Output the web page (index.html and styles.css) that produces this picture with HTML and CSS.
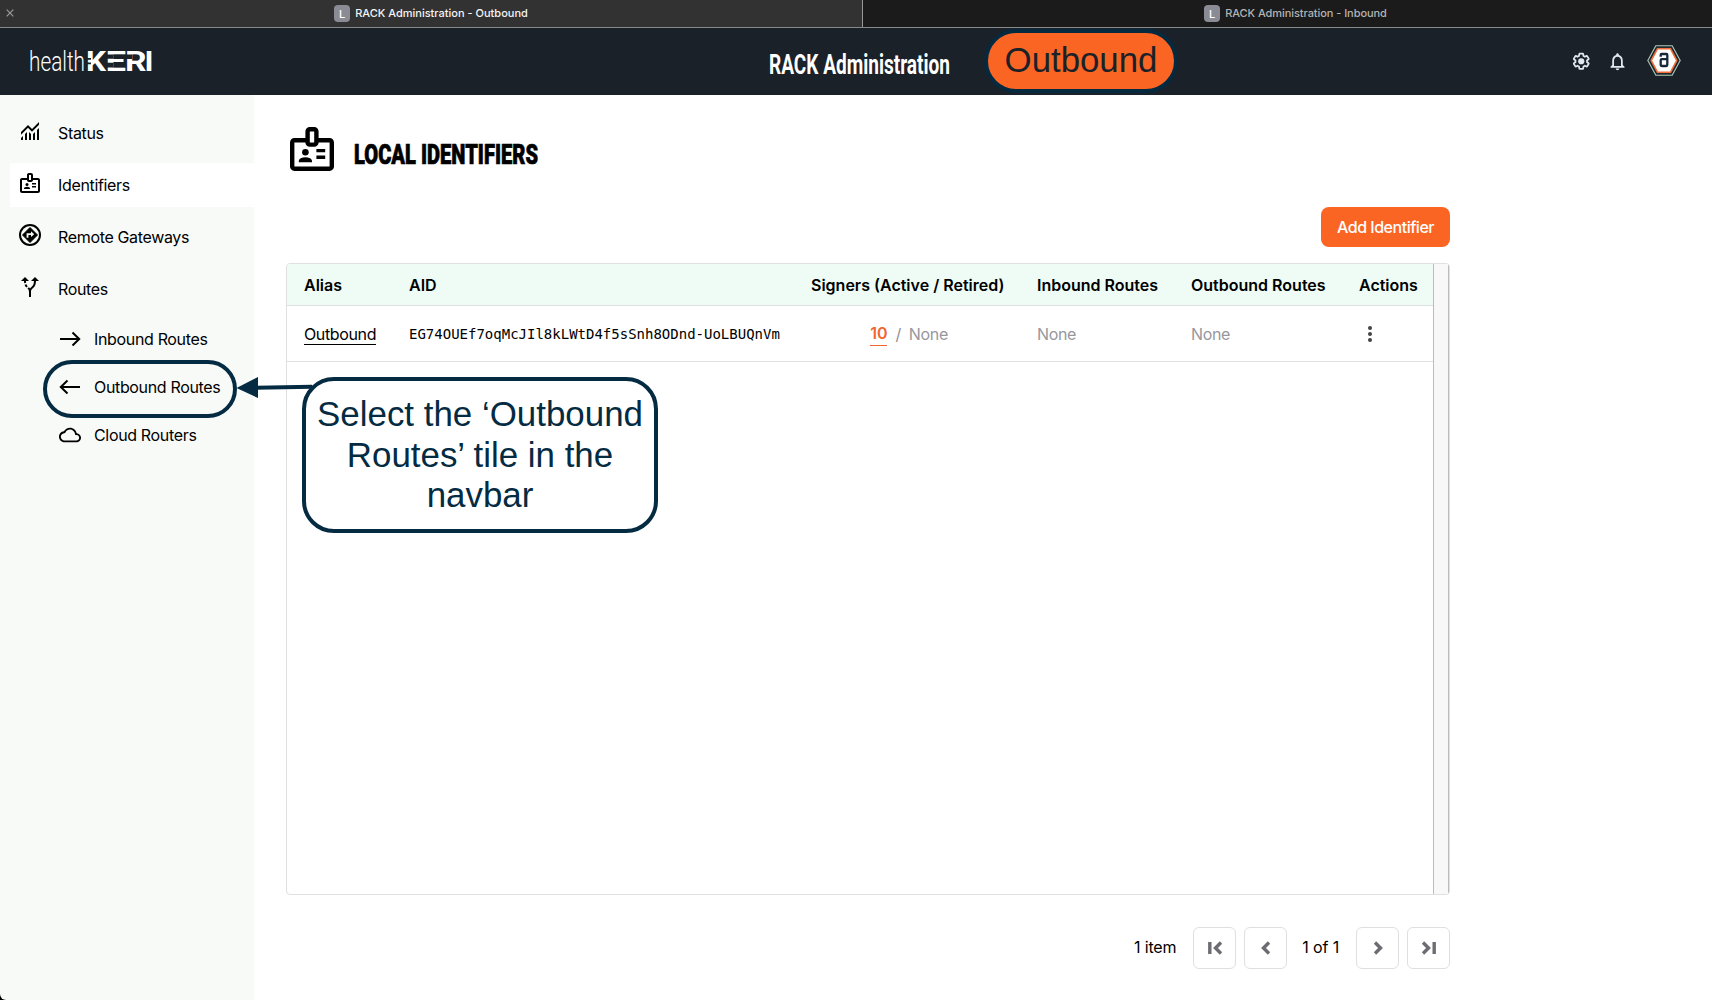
FILE: index.html
```html
<!DOCTYPE html>
<html lang="en">
<head>
<meta charset="utf-8">
<title>RACK Administration - Outbound</title>
<link rel="stylesheet" href="styles.css">
</head>
<body>
<div class="tabs">
  <div class="tab tab-active">
    <svg class="tab-close" viewBox="0 0 8 8"><path d="M.7.7l6.6 6.6M7.3.7L.7 7.3"/></svg>
    <span class="tab-badge">L</span><span class="tab-title">RACK Administration - Outbound</span>
  </div>
  <div class="tab tab-idle">
    <span class="tab-badge">L</span><span class="tab-title">RACK Administration - Inbound</span>
  </div>
</div>
<header class="header">
  <svg class="logo" viewBox="0 0 124 28">
    <text class="logo-thin" x="0" y="24" textLength="56" lengthAdjust="spacingAndGlyphs">health</text>
    <text class="logo-bold" x="57" y="24" textLength="20" lengthAdjust="spacingAndGlyphs">K</text>
    <text class="logo-bold" x="76.500" y="24" textLength="20.500" lengthAdjust="spacingAndGlyphs">E</text>
    <text class="logo-bold" x="96" y="24" textLength="21.500" lengthAdjust="spacingAndGlyphs">R</text>
    <text class="logo-bold" x="115.500" y="24" textLength="9" lengthAdjust="spacingAndGlyphs">I</text>
    <path class="logo-cut" d="M77 7.500h7.500v4.300H77zM77 15.800h7.500v4.600H77zM57 11h5v1.700h-5zM57 15.500h5v1.700h-5zM96.500 7.500h6.500v4.500h-6.500z"/>
  </svg>
  <svg class="app-title" viewBox="0 0 182 34">
    <text x="0" y="27" textLength="181" lengthAdjust="spacingAndGlyphs">RACK Administration</text>
  </svg>
  <span class="pill">Outbound</span>
  <div class="tools">
    <svg class="gear" viewBox="0 0 24 24"><path d="M19.43 12.98c.04-.32.07-.64.07-.98 0-.34-.03-.66-.07-.98l2.110-1.650c.19-.15.24-.42.12-.64l-2-3.460c-.09-.16-.26-.25-.44-.25-.06 0-.12.01-.17.03l-2.490 1c-.52-.4-1.080-.73-1.690-.98l-.38-2.650C14.460 2.180 14.250 2 14 2h-4c-.25 0-.46.18-.49.42l-.38 2.650c-.61.25-1.170.59-1.690.98l-2.490-1c-.06-.02-.12-.03-.18-.03-.17 0-.34.09-.43.25l-2 3.460c-.13.22-.07.49.12.64l2.110 1.650c-.04.32-.07.65-.07.98 0 .33.03.66.07.98l-2.110 1.650c-.19.15-.24.42-.12.64l2 3.460c.09.16.26.25.44.25.06 0 .12-.01.17-.03l2.490-1c.52.4 1.080.73 1.690.98l.38 2.650c.03.24.24.42.49.42h4c.25 0 .46-.18.49-.42l.38-2.650c.61-.25 1.170-.59 1.690-.98l2.490 1c.06.02.12.03.18.03.17 0 .34-.09.43-.25l2-3.460c.12-.22.07-.49-.12-.64z"/><circle cx="12" cy="12" r="4"/></svg>
    <svg class="bell" viewBox="0 0 24 24"><path d="M12 22c1.100 0 2-.9 2-2h-4c0 1.100.9 2 2 2zm6-6v-5c0-3.070-1.630-5.640-4.500-6.320V4c0-.83-.67-1.500-1.500-1.500s-1.500.67-1.500 1.500v.68C7.640 5.360 6 7.920 6 11v5l-2 2v1h16v-1l-2-2zm-2 1H8v-6c0-2.480 1.510-4.500 4-4.500s4 2.020 4 4.500v6z"/></svg>
    <svg class="avatar" viewBox="0 0 34 31">
      <path class="hex-line" d="M.8 15.500L8.800.7h16.400l8 14.800-8 14.800H8.800z"/>
      <path class="hex-fill" d="M4.200 15.500L10.500 3.700h13l6.300 11.800-6.300 11.800h-13z"/>
      <path class="hex-mark" d="M13.700 11.800V10q0-1 1-1h4.600q1 0 1 1v9.800q0 1.200-1 1.200h-4.600q-1 0-1-1v-4.800q0-1 1-1h5.600"/>
    </svg>
  </div>
</header>
<div class="body">
  <nav class="nav">
    <a class="item"><svg class="ico" viewBox="0 -960 960 960"><path d="M120-120v-80l80-80v160h-80Zm160 0v-240l80-80v320h-80Zm160 0v-320l80 81v239h-80Zm160 0v-239l80-80v319h-80Zm160 0v-400l80-80v480h-80ZM120-327v-113l280-280 160 160 280-280v113L560-447 400-607 120-327Z"/></svg><span>Status</span></a>
    <a class="item item-on"><svg class="ico" viewBox="0 0 24 24"><path d="M20 7h-5V4c0-1.100-.9-2-2-2h-2c-1.100 0-2 .9-2 2v3H4c-1.100 0-2 .9-2 2v11c0 1.100.9 2 2 2h16c1.100 0 2-.9 2-2V9c0-1.100-.9-2-2-2zM11 4h2v5h-2V4zm9 16H4V9h5c0 1.100.9 2 2 2h2c1.100 0 2-.9 2-2h5v11z"/><circle cx="9" cy="13.500" r="1.500"/><path d="M6 18v-.43c0-.6.36-1.150.92-1.390a5.300 5.300 0 0 1 4.160 0c.56.24.92.780.92 1.390V18zM14 12h4v1.500h-4zM14 15h4v1.500h-4z"/></svg><span>Identifiers</span></a>
    <a class="item"><svg class="ico" viewBox="0 0 24 24"><circle class="ring" cx="12" cy="12" r="10"/><path d="M12 4.500l7.500 7.500-7.500 7.500L4.500 12z" stroke="#000" stroke-linejoin="round"/><path class="turn" d="M9.500 14.800v-3.600h4.300"/><path fill="#f8faf8" d="M13 8.300l3.200 2.900-3.200 2.900z"/></svg><span>Remote Gateways</span></a>
    <a class="item"><svg class="ico" viewBox="0 0 24 24"><path d="M9.780 11.160l-1.420 1.420c-.68-.69-1.340-1.580-1.790-2.940l1.940-.49c.32.89.77 1.500 1.270 2.010zM11 6L7 2 3 6h3.020c.02.81.08 1.540.19 2.170l1.940-.49C8.080 7.200 8.030 6.630 8.020 6H11zm10 0l-4-4-4 4h2.990c-.1 3.680-1.280 4.750-2.540 5.880-.5.44-1.010.92-1.450 1.550-.34-.49-.73-.88-1.130-1.240L9.460 13.600c.93.85 1.540 1.540 1.540 3.400v5h2v-5c0-2.020.71-2.660 1.790-3.630 1.380-1.240 3.080-2.780 3.200-7.370H21z"/></svg><span>Routes</span></a>
    <div class="sub">
      <a class="subitem"><svg class="sico" viewBox="0 0 22 22"><path class="line" d="M1 11h19.500M13.500 4.500L20.200 11l-6.700 6.500"/></svg><span>Inbound Routes</span></a>
      <a class="subitem"><svg class="sico" viewBox="0 0 22 22"><path class="line" d="M21 11H1.500M8.500 4.500L1.800 11l6.700 6.500"/></svg><span>Outbound Routes</span></a>
      <a class="subitem"><svg class="sico" viewBox="0 0 24 24"><path d="M19.350 10.040C18.670 6.590 15.640 4 12 4 9.110 4 6.600 5.640 5.350 8.040 2.340 8.360 0 10.910 0 14c0 3.310 2.690 6 6 6h13c2.760 0 5-2.240 5-5 0-2.640-2.050-4.780-4.650-4.960zM19 18H6c-2.210 0-4-1.790-4-4 0-2.050 1.530-3.760 3.560-3.970l1.070-.11.5-.95C8.080 7.140 9.940 6 12 6c2.620 0 4.880 1.860 5.390 4.430l.3 1.500 1.530.11c1.560.1 2.780 1.410 2.780 2.960 0 1.650-1.350 3-3 3z"/></svg><span>Cloud Routers</span></a>
    </div>
  </nav>
  <main class="main">
    <div class="heading">
      <svg class="heading-ico" viewBox="2 2 20 20"><path d="M20 7h-5V4c0-1.100-.9-2-2-2h-2c-1.100 0-2 .9-2 2v3H4c-1.100 0-2 .9-2 2v11c0 1.100.9 2 2 2h16c1.100 0 2-.9 2-2V9c0-1.100-.9-2-2-2zM11 4h2v5h-2V4zm9 16H4V9h5c0 1.100.9 2 2 2h2c1.100 0 2-.9 2-2h5v11z"/><circle cx="9" cy="13.500" r="1.500"/><path d="M6 18v-.43c0-.6.36-1.150.92-1.390a5.300 5.300 0 0 1 4.160 0c.56.24.92.780.92 1.390V18zM14 12h4v1.500h-4zM14 15h4v1.500h-4z"/></svg>
      <svg class="heading-text" viewBox="0 0 186 34"><text x="0" y="27" textLength="184" lengthAdjust="spacingAndGlyphs">LOCAL IDENTIFIERS</text></svg>
    </div>
    <div class="actions"><button class="add">Add Identifier</button></div>
    <div class="panel">
      <div class="grid">
        <div class="row row-head">
          <span>Alias</span><span>AID</span><span>Signers (Active / Retired)</span><span>Inbound Routes</span><span>Outbound Routes</span><span>Actions</span>
        </div>
        <div class="row row-data">
          <span><a class="alias">Outbound</a></span>
          <span class="aid">EG74OUEf7oqMcJIl8kLWtD4f5sSnh8ODnd-UoLBUQnVm</span>
          <span class="signers"><a class="count">10</a><i>/</i><em>None</em></span>
          <span class="none">None</span>
          <span class="none">None</span>
          <span class="dots"><svg viewBox="0 0 4 18"><circle cx="2" cy="3" r="2"/><circle cx="2" cy="9" r="2"/><circle cx="2" cy="15" r="2"/></svg></span>
        </div>
      </div>
      <div class="gutter"></div>
    </div>
    <div class="pager">
      <span class="total">1 item</span>
      <button class="pg"><svg viewBox="0 0 16 12"><path d="M2.800 0v12M14 .5L8.500 6l5.500 5.500"/></svg></button>
      <button class="pg"><svg viewBox="0 0 16 12"><path d="M11 .5L5.500 6l5.500 5.500"/></svg></button>
      <span class="page">1 of 1</span>
      <button class="pg"><svg viewBox="0 0 16 12"><path d="M5 .5L10.500 6 5 11.500"/></svg></button>
      <button class="pg"><svg viewBox="0 0 16 12"><path d="M13.200 0v12M2 .5L7.500 6 2 11.500"/></svg></button>
    </div>
  </main>
</div>
<svg class="arrow" viewBox="0 0 80 24"><path class="shaft" d="M20 11.700L76 10.800"/><path d="M.5 12L22 1v21z"/></svg>
<div class="highlight"></div>
<div class="callout">Select the ‘Outbound Routes’ tile in the navbar</div>
</body>
</html>
```
FILE: styles.css
```css
* { box-sizing: border-box; }
body {
  margin: 0;
  width: 1712px;
  height: 1000px;
  overflow: hidden;
  display: flex;
  flex-direction: column;
  position: relative;
  background: #fff;
  color: #000;
  font: 16px/24px Inter, "Liberation Sans", sans-serif;
}
button { font: inherit; margin: 0; padding: 0; }
svg { display: block; flex: none; overflow: visible; }

/* window tabs */
.tabs { display: grid; grid-template-columns: 862px 1fr; height: 28px; flex: none; border-bottom: 1px solid #85898a; }
.tab { display: flex; align-items: center; justify-content: center; position: relative; background: #1b1b1b; color: #b4b4b4; border-left: 1px solid #969696; }
.tab-active { background: #323232; color: #f4f4f4; border-left: 0; }
.tab-idle { padding-left: 16px; }
.tab-close { position: absolute; left: 6px; top: 9px; width: 8px; height: 8px; stroke: #9c9c9c; stroke-width: 1.2; }
.tab-badge { width: 16px; height: 17px; margin-right: 5px; border-radius: 4px; background: #8b8b95; color: #fff; font: 500 11px/18px Inter, sans-serif; text-align: center; }
.tab-title { padding-bottom: 2px; font-size: 11px; font-weight: 500; }
.tab-idle .tab-title { letter-spacing: -.06px; }

/* application header */
.header { display: flex; height: 67px; background: #1a2128; flex: none; }
.logo { width: 124px; height: 28px; margin: 19px 0 0 29px; }
.logo text { fill: #fff; font-family: Roboto, sans-serif; }
.logo-thin { font-size: 27.5px; font-weight: 300; }
.logo-bold { font-size: 28px; font-weight: 700; }
.logo-cut { fill: #1a2128; }
.app-title { width: 182px; height: 34px; margin: 19px 0 0 616px; }
.app-title text { fill: #fff; font: 700 28px Roboto, sans-serif; }
.pill { width: 194px; height: 64px; margin: 1px 0 0 33px; border: 4px solid #05293f; border-radius: 32px; background: #fb6524; color: #1a2128; font: 34.8px/54px "Liberation Sans", Arial, sans-serif; text-align: center; }
.tools { display: flex; align-items: center; margin-left: auto; padding-right: 31px; height: 66px; }
.gear { width: 18.5px; height: 18.5px; margin-right: 17px; fill: #e2e8ef; }
.gear path { fill: none; stroke: #e2e8ef; stroke-width: 2.2; }
.bell { width: 21px; height: 21px; margin-right: 19px; fill: #e2e8ef; }
.avatar { width: 34px; height: 31px; margin-bottom: 2px; }
.hex-line { fill: #24282b; stroke: #a9c9bd; stroke-width: 1.1; }
.hex-fill { fill: #fff; stroke: #ee6d3c; stroke-width: 1.6; }
.hex-mark { fill: none; stroke: #14283a; stroke-width: 2.3; }

/* side navigation */
.body { display: flex; flex: 1; background: linear-gradient(90deg, #000 20px, #fff 20px); }
.nav { width: 254px; padding-top: 16px; background: #f8faf8; border-bottom-left-radius: 6px; letter-spacing: -.34px; }
.item { display: flex; align-items: center; height: 44px; margin: 0 0 8px 10px; padding-left: 8px; }
.item-on { background: #fff; }
.ico { width: 24px; height: 24px; margin: 0 16px 4px 0; }
.item span { padding-bottom: 1px; }
.ring { fill: none; stroke: #000; stroke-width: 2; }
.turn { fill: none; stroke: #f8faf8; stroke-width: 1.8; }
.sub { margin-top: -4px; padding-left: 59px; }
.subitem { display: flex; align-items: center; height: 48px; }
.sico { width: 22px; height: 22px; margin-right: 13px; }
.line { fill: none; stroke: #000; stroke-width: 2; }

/* main content */
.main { flex: 1; padding: 32px 262px 0 32px; background: #fff; }
.heading { display: flex; height: 44px; padding-left: 4px; }
.heading-ico { width: 44px; height: 44px; }
.heading-text { width: 186px; height: 34px; margin: 10px 0 0 20px; }
.heading-text text { font: 900 27.5px Roboto, sans-serif; stroke: #000; stroke-width: .7; }
.actions { display: flex; justify-content: flex-end; margin-top: 36px; }
.add { width: 129px; height: 40px; border: 0; border-radius: 8px; background: #fb6524; color: #fff; font-weight: 500; letter-spacing: -.48px; }
.panel { display: flex; height: 632px; margin-top: 16px; border: 1px solid #dfe0e2; border-radius: 4px; overflow: hidden; }
.grid { flex: 1; }
.gutter { width: 16px; border: 1px solid #bcbcc0; border-width: 0 1px; background: #f8f8f9; }
.row { display: grid; grid-template-columns: 105px 402px 226px 154px 168px 1fr; align-items: center; padding-left: 17px; border-bottom: 1px solid #dfe0e2; }
.row-head { height: 42px; background: #eefcf5; font-weight: 600; }
.row-data { height: 56px; letter-spacing: -.36px; }
.alias { border-bottom: 1px solid #000; }
.aid { font: 14px/24px "DejaVu Sans Mono", monospace; letter-spacing: 0; }
.signers { display: flex; justify-content: center; padding-right: 30px; }
.count { color: #f1652f; border-bottom: 1px solid #f1652f; font-weight: 600; line-height: 23px; letter-spacing: 0; }
.signers i { margin: 0 8px; font-style: normal; color: #8f8f95; }
.signers em, .none { font-style: normal; color: #97979d; }
.dots { padding-left: 9px; }
.dots svg { width: 4px; height: 18px; fill: #444; }

/* pagination */
.pager { display: flex; align-items: center; justify-content: flex-end; margin-top: 32px; }
.pg { display: flex; align-items: center; justify-content: center; width: 43px; height: 42px; margin-left: 8px; border: 1px solid #dfdfe2; border-radius: 6px; background: #fff; }
.pg svg { width: 16px; height: 12px; fill: none; stroke: #6c6c72; stroke-width: 3.4; }
.total { margin-right: 9px; padding-bottom: 2px; letter-spacing: -.15px; }
.page { margin: 0 9px 0 15px; padding-bottom: 2px; letter-spacing: -.15px; }

/* annotations over the page */
.highlight { position: absolute; left: 43px; top: 360px; width: 194px; height: 58px; border: 4px solid #042b42; border-radius: 29px; }
.arrow { position: absolute; left: 236px; top: 376px; width: 80px; height: 24px; fill: #042b42; }
.shaft { stroke: #042b42; stroke-width: 4; }
.callout { position: absolute; left: 302px; top: 377px; width: 356px; height: 156px; padding: 13px 4px 0; border: 4px solid #042b42; border-radius: 32px; background: #fff; color: #042b42; font: 34.9px/40.5px "Liberation Sans", Arial, sans-serif; text-align: center; }
```
